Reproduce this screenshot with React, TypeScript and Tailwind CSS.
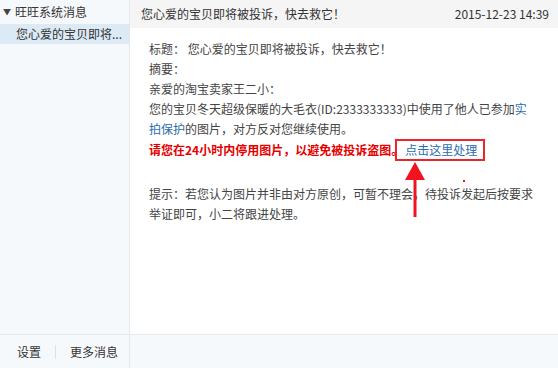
const font = { fontFamily: '"Microsoft YaHei", "Noto Sans CJK SC", "Liberation Sans", sans-serif' }

const App = () => {
	return (
		<div className="w-[558px] h-[368px] flex flex-col bg-white text-[12px] text-[#444] overflow-hidden" style={font}>
			<div className="flex flex-1 min-h-0">
				<div className="w-[130px] flex flex-col bg-[#f6f9fc] border-r border-[#e6e9ec]">
					<div className="h-[24px] flex items-center pl-[3px] text-[#333]">
						<span className="text-[8px] mr-[4px] text-[#444]">▼</span>
						<span>旺旺系统消息</span>
					</div>
					<div className="h-[20px] flex items-center pl-[16px] bg-[#dceaf6] text-[#333] whitespace-nowrap">您心爱的宝贝即将...</div>
				</div>
				<div className="flex-1 flex flex-col relative">
					<div className="h-[28px] flex items-center justify-between pl-[11px] pr-[9px] bg-[#f5f5f5] text-[#333]">
						<span>您心爱的宝贝即将被投诉，快去救它！</span>
						<span>2015-12-23 14:39</span>
					</div>
					<div className="pl-[19px] pt-[11px] leading-[20px]">
						<p>标题： 您心爱的宝贝即将被投诉，快去救它！</p>
						<p>摘要：</p>
						<p>亲爱的淘宝卖家王二小：</p>
						<p>您的宝贝冬天超级保暖的大毛衣(ID:2333333333)中使用了他人已参加<span className="text-[#2b6cb0]">实</span></p>
						<p><span className="text-[#2b6cb0]">拍保护</span>的图片，对方反对您继续使用。</p>
						<p>
							<span className="text-[#e60000] font-bold">请您在24小时内停用图片，以避免被投诉盗图。</span>
							<span className="inline-block border-2 border-[#e8262b] pl-[8px] pr-[6px] leading-[18px] text-[#2b6cb0] -ml-[8px]">点击这里处理</span>
						</p>
						<p className="mt-[23px]">提示：若您认为图片并非由对方原创，可暂不理会，待投诉发起后按要求</p>
						<p>举证即可，小二将跟进处理。</p>
					</div>
					<svg className="absolute left-[270px] top-[161px]" width="30" height="58" viewBox="0 0 30 58">
						<polygon points="15,1 5,19 25,19" fill="#f0141e" />
						<rect x="13.5" y="18" width="3" height="38" fill="#f0141e" />
					</svg>
					<div className="absolute left-[333px] top-[180px] w-[2px] h-[2px] bg-[#f0141e]" />
				</div>
			</div>
			<div className="h-[34px] flex border-t border-[#e6ebf0] bg-[#f6f9fc]">
				<div className="w-[130px] flex items-center border-r border-[#e6e9ec] text-[#333]">
					<span className="ml-[17px]">设置</span>
					<span className="mx-[14px] w-px h-[14px] bg-[#dde2e6]" />
					<span>更多消息</span>
				</div>
				<div className="flex-1" />
			</div>
		</div>
	)
}

export default App
